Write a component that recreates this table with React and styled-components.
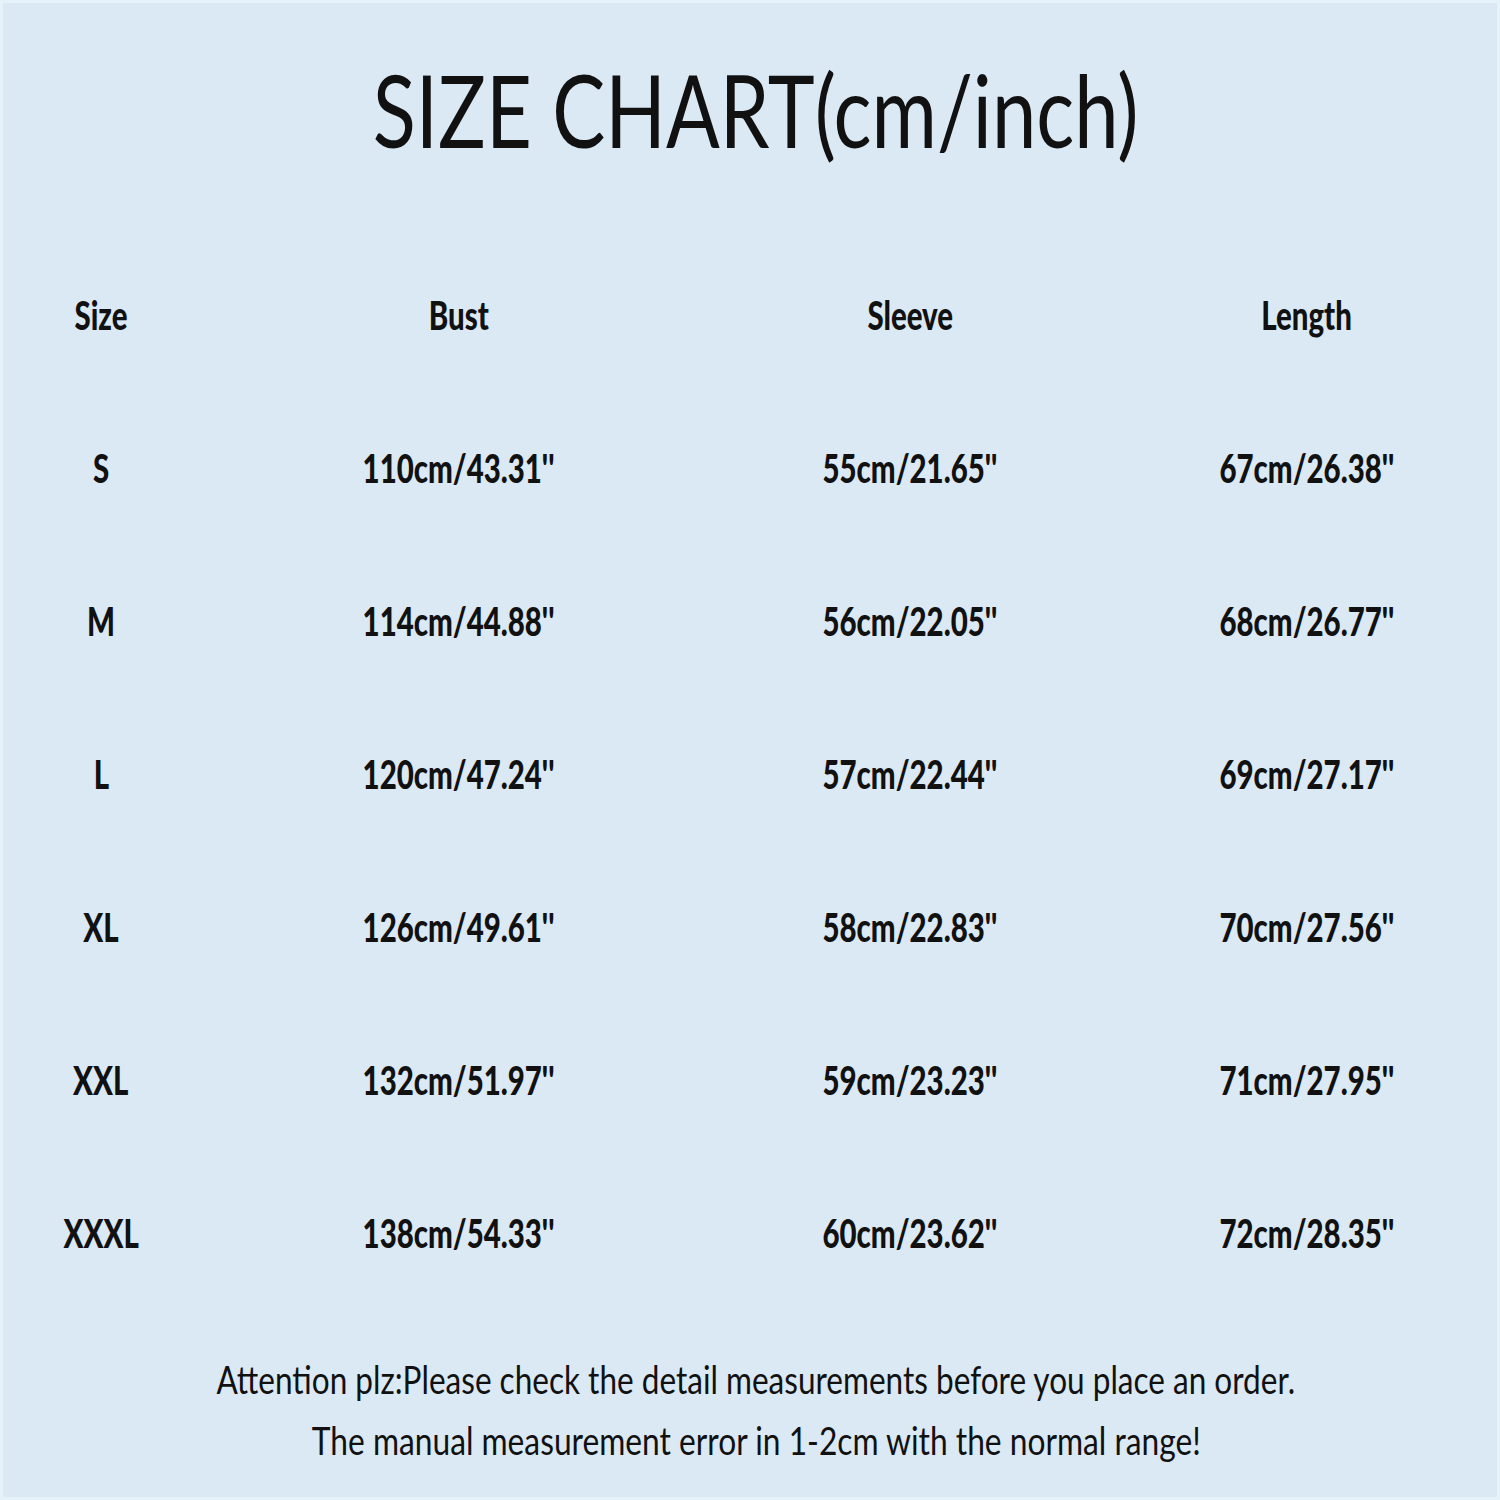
import React from "react";
import styled, { createGlobalStyle } from "styled-components";

const GlobalStyle = createGlobalStyle`
  html, body {
    margin: 0;
    padding: 0;
    background: #dbe9f4;
  }
`;

const Page = styled.div`
  width: 1500px;
  height: 1500px;
  box-sizing: border-box;
  border: 3px solid #e6f2fa;
  background: #dbe9f4;
  color: #111;
  display: flex;
  flex-direction: column;
  overflow: hidden;
`;

const Header = styled.header`
  height: 235px;
  display: flex;
  justify-content: center;
  padding: 36px 0 0 12px;
  box-sizing: border-box;
`;

const Squeeze = styled.span`
  display: inline-block;
  white-space: nowrap;
  transform: scaleX(${(p) => p.$sx || 1});
  transform-origin: center;
`;

const Title = styled.h1`
  margin: 0;
  font-family: "Lato", "Noto Sans", sans-serif;
  font-weight: 400;
  font-size: 100px;
  line-height: 140px;
`;

const Table = styled.div`
  display: grid;
  grid-template-columns: 196px 520px 382px 1fr;
  grid-auto-rows: 153px;
  align-items: center;
`;

const Cell = styled.div`
  text-align: center;
  font-family: "Lato", "Noto Sans", sans-serif;
  font-weight: 900;
  font-size: 40px;
  line-height: 1;
  padding-left: ${(p) => (p.$last ? "16px" : "0")};
`;

const Notes = styled.div`
  padding: 40px 0 0 12px;
  display: flex;
  flex-direction: column;
  align-items: center;
`;

const NoteLine = styled.p`
  margin: 0;
  font-family: "Lato", "Noto Sans", sans-serif;
  font-weight: 400;
  font-size: 38px;
  line-height: 61px;
`;

const headers = ["Size", "Bust", "Sleeve", "Length"];

const rows = [
  ["S", "110cm/43.31''", "55cm/21.65''", "67cm/26.38''"],
  ["M", "114cm/44.88''", "56cm/22.05''", "68cm/26.77''"],
  ["L", "120cm/47.24''", "57cm/22.44''", "69cm/27.17''"],
  ["XL", "126cm/49.61''", "58cm/22.83''", "70cm/27.56''"],
  ["XXL", "132cm/51.97''", "59cm/23.23''", "71cm/27.95''"],
  ["XXXL", "138cm/54.33''", "60cm/23.62''", "72cm/28.35''"],
];

const SX = 0.735;

export default function App() {
  return (
    <>
      <GlobalStyle />
      <Page>
        <Header>
          <Title>
            <Squeeze $sx={0.795}>SIZE CHART(cm/inch)</Squeeze>
          </Title>
        </Header>
        <Table>
          {headers.map((h, i) => (
            <Cell key={h} $last={i === 3}>
              <Squeeze $sx={SX}>{h}</Squeeze>
            </Cell>
          ))}
          {rows.map((r) =>
            r.map((v, i) => (
              <Cell key={r[0] + i} $last={i === 3}>
                <Squeeze $sx={SX}>{v}</Squeeze>
              </Cell>
            ))
          )}
        </Table>
        <Notes>
          <NoteLine>
            <Squeeze $sx={0.83}>
              Attention plz:Please check the detail measurements before you place an order.
            </Squeeze>
          </NoteLine>
          <NoteLine>
            <Squeeze $sx={0.835}>
              The manual measurement error in 1-2cm with the normal range!
            </Squeeze>
          </NoteLine>
        </Notes>
      </Page>
    </>
  );
}
